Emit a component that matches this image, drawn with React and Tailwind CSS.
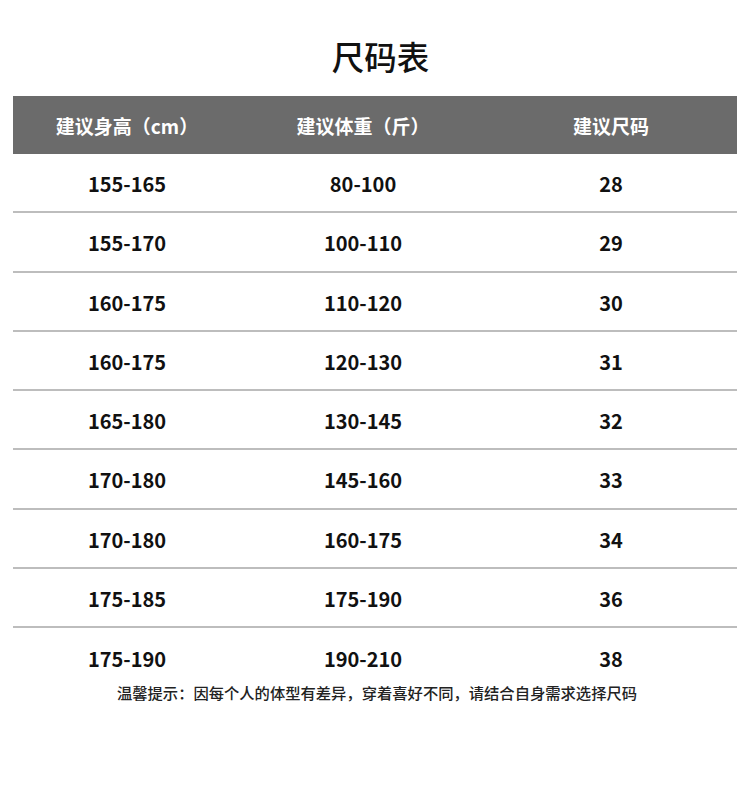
const rows = [
  ['155-165', '80-100', '28'],
  ['155-170', '100-110', '29'],
  ['160-175', '110-120', '30'],
  ['160-175', '120-130', '31'],
  ['165-180', '130-145', '32'],
  ['170-180', '145-160', '33'],
  ['170-180', '160-175', '34'],
  ['175-185', '175-190', '36'],
  ['175-190', '190-210', '38'],
];

const font = { fontFamily: '"Noto Sans CJK SC", "Noto Sans", sans-serif' };

export default function App() {
  return (
    <div className="w-[750px] h-[798px] bg-white text-[#111]" style={font}>
      {/* Title */}
      <div className="pt-[32px] pl-[11px] h-[96px] text-center text-[32.5px] font-medium leading-[48px]">尺码表</div>

      <div className="mx-[13px]">
        {/* Header */}
        <div className="grid grid-cols-[228px_244px_1fr] h-[58px] items-center bg-[#6b6b6b] text-white text-[19px] font-bold pt-[2px]">
          <div className="text-center">建议身高（cm）</div>
          <div className="text-center">建议体重（斤）</div>
          <div className="text-center">建议尺码</div>
        </div>

        {/* Rows */}
        {rows.map((r, i) => (
          <div
            key={i}
            className={`grid grid-cols-[228px_244px_1fr] h-[59.25px] items-center text-[20px] font-bold pt-[3px] ${i < rows.length - 1 ? 'border-b-2 border-[#bdbdbd]' : ''}`}
          >
            {r.map((c, j) => (
              <div key={j} className="text-center">{c}</div>
            ))}
          </div>
        ))}
      </div>

      {/* Note */}
      <div className="text-center pl-[4px] text-[15.3px] font-medium text-[#222] leading-[20px] -mt-[5px]">
        温馨提示：因每个人的体型有差异，穿着喜好不同，请结合自身需求选择尺码
      </div>
    </div>
  );
}
